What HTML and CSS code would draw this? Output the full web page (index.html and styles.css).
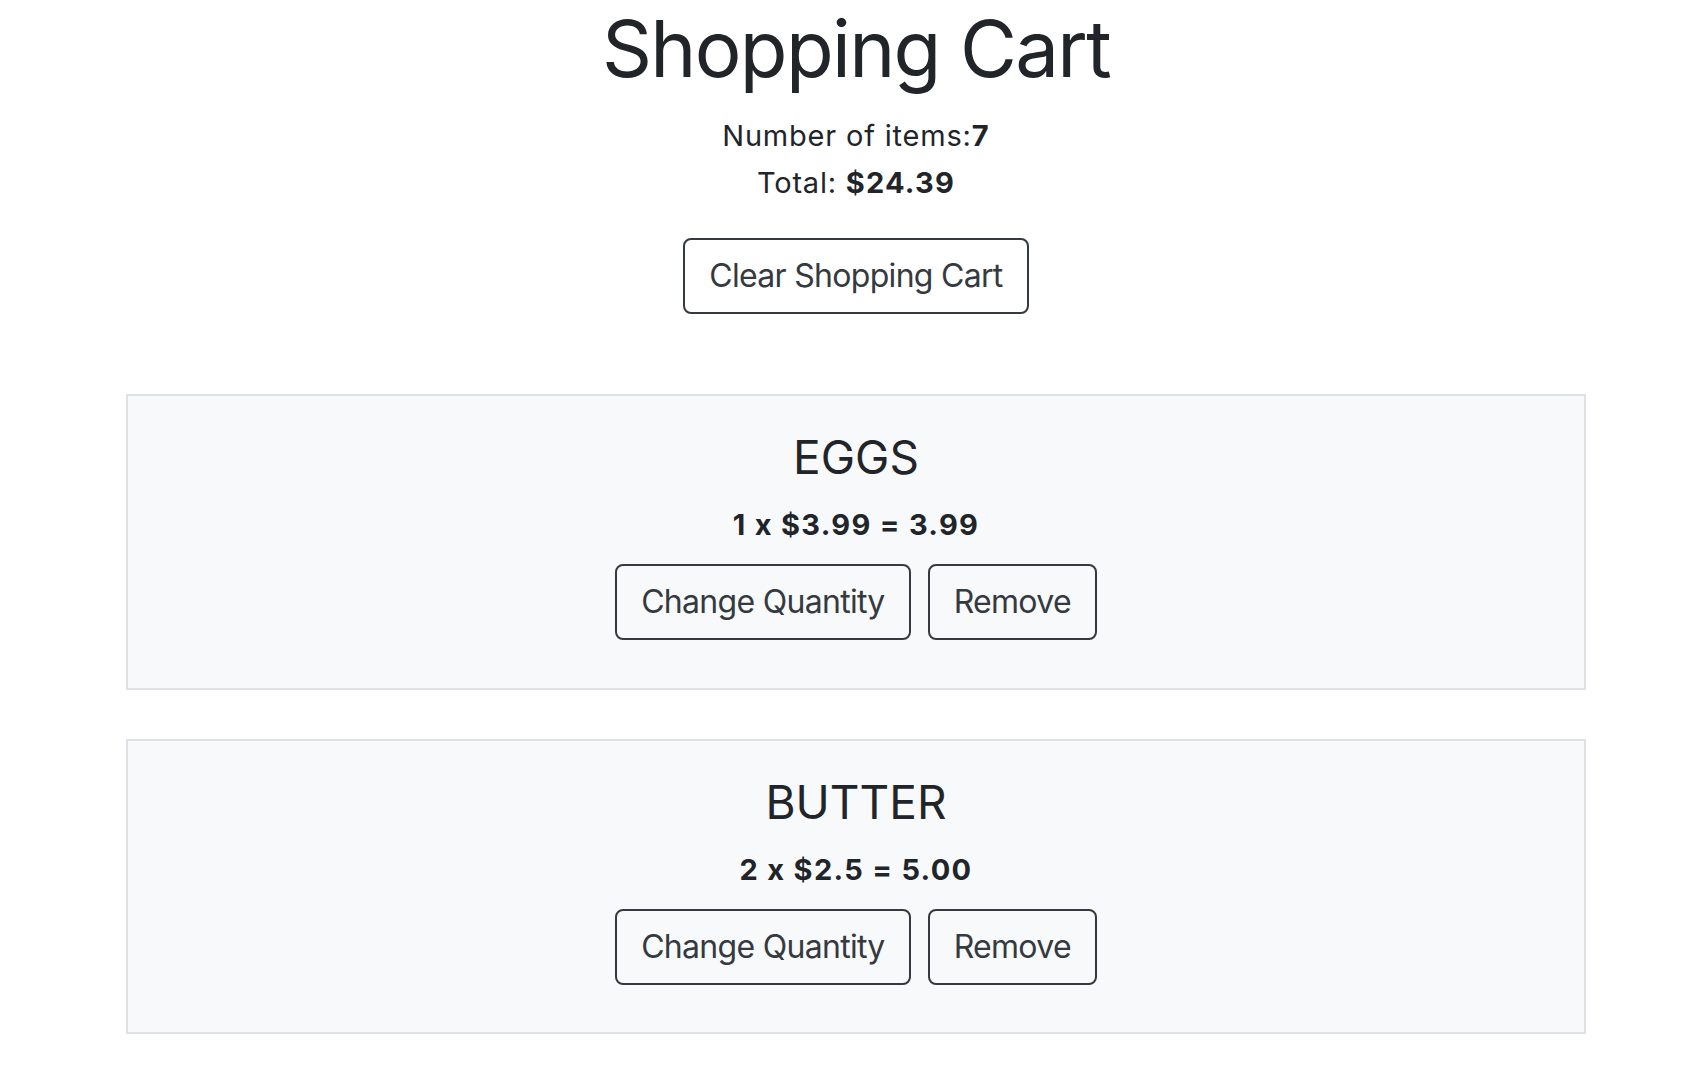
FILE: index.html
```html
<!DOCTYPE html>
<html lang="en">
<head>
<meta charset="utf-8">
<title>Shopping Cart</title>
<link rel="stylesheet" href="styles.css">
</head>
<body>
<div class="page">
  <header class="summary">
    <h1 class="title">Shopping Cart</h1>
    <div class="stats">
      <p>Number of items:<strong>7</strong></p>
      <p>Total: <strong>$24.39</strong></p>
    </div>
    <button class="btn">Clear Shopping Cart</button>
  </header>
  <main class="items">
    <section class="item">
      <h2 class="item-name">EGGS</h2>
      <p class="item-price">1 x $3.99 = 3.99</p>
      <div class="actions">
        <button class="btn">Change Quantity</button>
        <button class="btn">Remove</button>
      </div>
    </section>
    <section class="item">
      <h2 class="item-name">BUTTER</h2>
      <p class="item-price">2 x $2.5 = 5.00</p>
      <div class="actions">
        <button class="btn">Change Quantity</button>
        <button class="btn">Remove</button>
      </div>
    </section>
  </main>
</div>
</body>
</html>
```

FILE: styles.css
```css
* { box-sizing: border-box; }

html, body {
  margin: 0;
  background: #ffffff;
}

body {
  padding: 0 0 0 10px;
  font-family: Inter, "Noto Sans", "Liberation Sans", sans-serif;
  color: #212529;
}

.page {
  max-width: 1460px;
  margin: 0 auto;
}

.summary {
  display: flex;
  flex-direction: column;
  align-items: center;
  padding-top: 2px;
}

.title {
  margin: 0;
  font-size: 78px;
  line-height: 94px;
  font-weight: 400;
  letter-spacing: -1.7px;
}

.stats {
  margin-top: 15.5px;
  text-align: center;
  font-size: 29px;
  line-height: 47.6px;
  letter-spacing: 0.8px;
}

.stats p { margin: 0; }
.stats strong { font-weight: 700; letter-spacing: 1.2px; }

.btn {
  font-family: inherit;
  font-size: 32px;
  line-height: 48px;
  letter-spacing: -0.7px;
  padding: 12px 24px;
  color: #343a40;
  background: transparent;
  border: 2px solid #343a40;
  border-radius: 8px;
  cursor: pointer;
}

.summary .btn { margin-top: 31.6px; }

.items {
  margin-top: 80.2px;
  display: flex;
  flex-direction: column;
  gap: 49px;
}

.item {
  background: #f8f9fa;
  border: 2px solid #dee2e6;
  padding: 33.8px 0 47.7px;
  display: flex;
  flex-direction: column;
  align-items: center;
}

.item-name {
  margin: 0;
  font-size: 46px;
  line-height: 55px;
  font-weight: 400;
}

.item-price {
  margin: 19px 0 0;
  font-size: 29px;
  line-height: 42px;
  font-weight: 700;
  letter-spacing: 1.3px;
}

.actions {
  margin-top: 18px;
  display: flex;
  gap: 17px;
}
```
